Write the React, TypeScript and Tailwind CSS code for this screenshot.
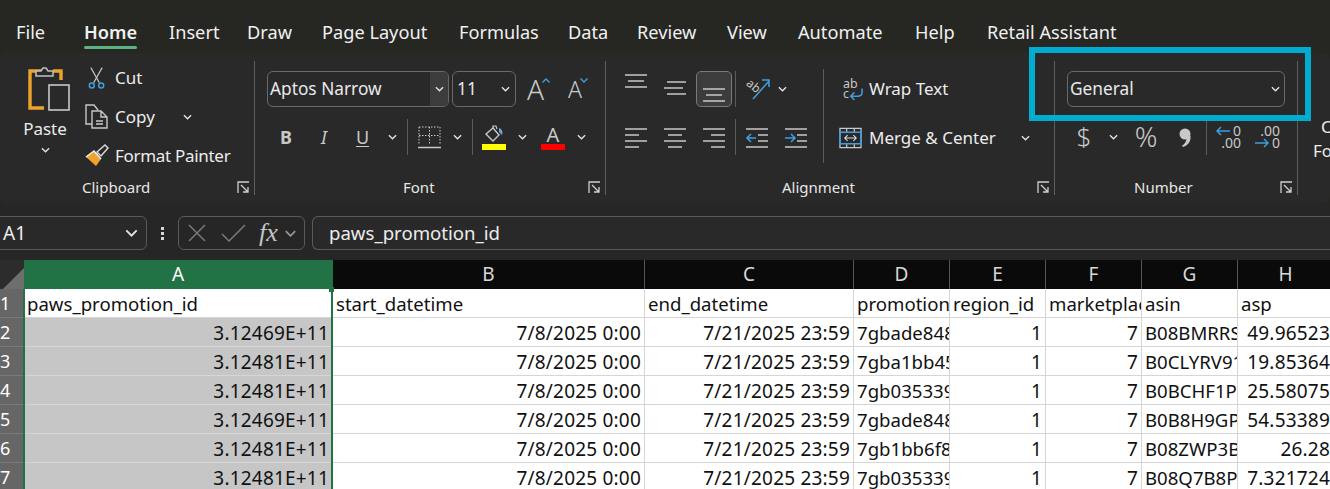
import type { ReactNode } from "react";

const uiFont = "font-['Noto_Sans',sans-serif]";

const tabs = [
  { label: "File", width: "w-[68px]", left: "ml-[16px]" },
  { label: "Home", width: "w-[85px]", active: true },
  { label: "Insert", width: "w-[78px]" },
  { label: "Draw", width: "w-[75px]" },
  { label: "Page Layout", width: "w-[137px]" },
  { label: "Formulas", width: "w-[109px]" },
  { label: "Data", width: "w-[69px]" },
  { label: "Review", width: "w-[90px]" },
  { label: "View", width: "w-[71px]" },
  { label: "Automate", width: "w-[117px]" },
  { label: "Help", width: "w-[72px]" },
  { label: "Retail Assistant", width: "w-[150px]" },
];

const columns = [
  { name: "A", width: "w-[309px]", active: true },
  { name: "B", width: "w-[312px]" },
  { name: "C", width: "w-[209px]" },
  { name: "D", width: "w-[96px]" },
  { name: "E", width: "w-[96px]" },
  { name: "F", width: "w-[96px]" },
  { name: "G", width: "w-[96px]" },
  { name: "H", width: "w-[96px]" },
];

// right: true means number-style right alignment
const rows: { text: string; right?: boolean }[][] = [
  [
    { text: "paws_promotion_id" },
    { text: "start_datetime" },
    { text: "end_datetime" },
    { text: "promotion_code" },
    { text: "region_id" },
    { text: "marketplace_id" },
    { text: "asin" },
    { text: "asp" },
  ],
  ...[
    ["3.12469E+11", "7gbade84812", "B08BMRRS1", "49.96523"],
    ["3.12481E+11", "7gba1bb4512", "B0CLYRV91", "19.85364"],
    ["3.12481E+11", "7gb03533912", "B0BCHF1P1", "25.58075"],
    ["3.12469E+11", "7gbade84812", "B0B8H9GP1", "54.53389"],
    ["3.12481E+11", "7gb1bb6f812", "B08ZWP3B1", "26.28"],
    ["3.12481E+11", "7gb03533912", "B08Q7B8P1", "7.321724"],
  ].map(([id, promo, asin, asp]) => [
    { text: id, right: true },
    { text: "7/8/2025 0:00", right: true },
    { text: "7/21/2025 23:59", right: true },
    { text: promo },
    { text: "1", right: true },
    { text: "7", right: true },
    { text: asin },
    { text: asp, right: true },
  ]),
];

function Chevron({ className = "" }: { className?: string }) {
  return (
    <svg viewBox="0 0 10 6" className={`w-[9px] h-[6px] shrink-0 ${className}`} fill="none" stroke="#e4e4e4" strokeWidth="1.5">
      <path d="M1 1l4 4 4-4" />
    </svg>
  );
}

function Lines({ ys, xs }: { ys: number[]; xs: [number, number][] }) {
  return (
    <svg viewBox="0 0 22 22" className="w-[22px] h-[22px]" stroke="#c8c8c8" strokeWidth="1.4">
      {ys.map((y, i) => (
        <path key={y} d={`M${xs[i][0]} ${y}H${xs[i][1]}`} />
      ))}
    </svg>
  );
}

function Launcher() {
  return (
    <svg viewBox="0 0 13 13" className="absolute right-[4px] top-[2px] w-[13px] h-[13px]" fill="none" strokeWidth="1.3">
      <path d="M12 1H1v11" stroke="#d0d0d0" />
      <path d="M4 4l7 7M11 6v5H6" stroke="#d0d0d0" />
    </svg>
  );
}

function Cell({ width, children }: { width: string; children?: ReactNode }) {
  return <div className={`${width} h-full flex items-center justify-center shrink-0`}>{children}</div>;
}

function Sep() {
  return <div className="w-px h-[36px] bg-[#5c5c5c] shrink-0" />;
}

function GroupDivider() {
  return <div className="w-px h-[134px] bg-[#5e5e5e] self-center shrink-0" />;
}

function GroupLabel({ label, pad }: { label: string; pad: string }) {
  return (
    <div className={`relative mt-auto h-[16px] mb-[8px] flex items-center ${pad} text-[15px] leading-none text-[#e6e6e6]`}>
      {label}
      <Launcher />
    </div>
  );
}

function ClipboardGroup() {
  return (
    <div className="w-[254px] shrink-0 flex flex-col">
      <div className="flex h-[122px] shrink-0">
        <div className="w-[82px] pt-[13px] flex flex-col items-center pl-[8px] shrink-0">
          <svg viewBox="0 0 42 46" className="w-[42px] h-[46px] ml-[7px]" fill="none">
            <path d="M15 5H2v37h14" stroke="#eda42e" strokeWidth="3.4" />
            <path d="M25 5h8v9" stroke="#eda42e" strokeWidth="3.4" />
            <path d="M8 10V5h5l2-3h3l2 3h5v5z" fill="#292929" stroke="#c0c0c0" strokeWidth="1.5" />
            <rect x="21" y="19" width="20" height="25" fill="#292929" stroke="#c8c8c8" strokeWidth="1.6" />
          </svg>
          <span className="text-[17px] leading-none mt-[8px] text-[#ececec]">Paste</span>
          <Chevron className="mt-[10px]" />
        </div>
        <div className="flex flex-col pt-[5px] text-[17px] text-[#ececec] leading-none">
          <div className="h-[39px] shrink-0 flex items-center gap-[10px] pl-[6px]">
            <svg viewBox="0 0 18 24" className="w-[17px] h-[24px]" fill="none">
              <path d="M3 1l9 16M15 1L6 17" stroke="#c4c4c4" strokeWidth="1.3" />
              <circle cx="4" cy="20" r="2.6" stroke="#3f9ddd" strokeWidth="1.6" />
              <circle cx="14" cy="20" r="2.6" stroke="#3f9ddd" strokeWidth="1.6" />
            </svg>
            <span>Cut</span>
          </div>
          <div className="h-[39px] shrink-0 flex items-center gap-[6px] pl-[3px]">
            <svg viewBox="0 0 24 25" className="w-[24px] h-[25px]" fill="none" stroke="#c8c8c8" strokeWidth="1.4">
              <path d="M7 20H1V1h8l4 5" />
              <path d="M7 7h9l6 6v11H7zM16 7v6h6M11 17h7M11 20h7" fill="#292929" />
            </svg>
            <span className="w-[62px]">Copy</span>
            <Chevron />
          </div>
          <div className="h-[39px] shrink-0 flex items-center gap-[6px] pl-[3px]">
            <svg viewBox="0 0 24 23" className="w-[24px] h-[23px]" fill="none">
              <path d="M1 13l8-6 7 8-5 7z" fill="#eda42e" />
              <path d="M1 13l8-6 7 8" stroke="#f0f0f0" strokeWidth="1.5" />
              <path d="M12 8l8-7 3 3-7 8z" fill="#292929" stroke="#d8d8d8" strokeWidth="1.5" />
            </svg>
            <span className="tracking-[-0.3px]">Format Painter</span>
          </div>
        </div>
      </div>
      <GroupLabel label="Clipboard" pad="pl-[82px]" />
    </div>
  );
}

function FontGroup() {
  return (
    <div className="w-[350px] shrink-0 flex flex-col pt-[18px] pl-[12px]">
      <div className="h-[36px] flex items-center text-[#e8e8e8]">
        <div className="w-[182px] h-full flex items-center rounded-[6px] border border-[#6a6a6a] overflow-hidden shrink-0">
          <span className="pl-[2px] text-[17.3px] flex-1">Aptos Narrow</span>
          <div className="w-[18px] h-full bg-[#3c3c3c] flex items-center justify-center">
            <Chevron />
          </div>
        </div>
        <div className="ml-[3px] w-[64px] h-full flex items-center justify-between rounded-[6px] border border-[#6a6a6a] px-[4px] pr-[5px] shrink-0">
          <span className="text-[17.3px]">11</span>
          <Chevron />
        </div>
        <span className="ml-[11px] w-[15px] text-[28px] leading-none text-[#c8c8c8] font-light">A</span>
        <svg viewBox="0 0 8 5" className="w-[8px] h-[5px] -mt-[18px]" fill="none" stroke="#3f9ddd" strokeWidth="1.4">
          <path d="M0.5 4.5L4 1l3.5 3.5" />
        </svg>
        <span className="ml-[18px] w-[12px] text-[23px] leading-none text-[#c8c8c8] font-light">A</span>
        <svg viewBox="0 0 8 5" className="w-[8px] h-[5px] -mt-[18px]" fill="none" stroke="#3f9ddd" strokeWidth="1.4">
          <path d="M0.5 0.5L4 4l3.5-3.5" />
        </svg>
      </div>
      <div className="h-[36px] mt-[12px] flex items-center">
        <Cell width="w-[38px]">
          <span className="text-[18px] font-bold text-[#c8c8c8]">B</span>
        </Cell>
        <Cell width="w-[38px]">
          <span className="text-[18px] italic text-[#c8c8c8]">I</span>
        </Cell>
        <Cell width="w-[39px]">
          <span className="text-[18px] underline underline-offset-2 text-[#c8c8c8]">U</span>
        </Cell>
        <Cell width="w-[20px]">
          <Chevron />
        </Cell>
        <div className="w-[5px] shrink-0" />
        <Sep />
        <Cell width="w-[42px]">
          <svg viewBox="0 0 23 23" className="w-[23px] h-[23px]" fill="none" stroke="#c8c8c8">
            <path d="M1 1h21M1 1v17M22 1v17M1 9.500h21M11.500 1v17" strokeDasharray="1.500 1.500" />
            <path d="M0 21.500h23" strokeWidth="1.600" />
          </svg>
        </Cell>
        <Cell width="w-[14px]">
          <Chevron />
        </Cell>
        <div className="w-[8px] shrink-0" />
        <Sep />
        <Cell width="w-[42px]">
          <svg viewBox="0 0 24 25" className="w-[24px] h-[25px]" fill="none">
            <path d="M4 9l7-6 6 7-6 6z" stroke="#c8c8c8" strokeWidth="1.4" />
            <path d="M11 3V1h3l1 3" stroke="#c8c8c8" strokeWidth="1.2" />
            <path d="M17 3c3 1 4 4 3 7l-3-3z" fill="#6fa8d8" />
            <rect y="19" width="24" height="6" fill="#ffff00" />
          </svg>
        </Cell>
        <Cell width="w-[14px]">
          <Chevron />
        </Cell>
        <Cell width="w-[48px]">
          <div className="flex flex-col items-center">
            <span className="text-[20px] leading-[19px] text-[#c8c8c8]">A</span>
            <div className="w-[24px] h-[6px] bg-[#ff0000]" />
          </div>
        </Cell>
        <Cell width="w-[9px]">
          <Chevron />
        </Cell>
      </div>
      <GroupLabel label="Font" pad="pl-[136px]" />
    </div>
  );
}

function AlignmentGroup() {
  const narrow: [number, number][] = [
    [0, 22],
    [3, 19],
    [0, 22],
  ];
  return (
    <div className="w-[448px] shrink-0 flex flex-col pt-[18px]">
      <div className="flex h-[84px]">
        <div className="w-[217px] shrink-0 flex flex-col gap-[12px]">
          <div className="h-[36px] flex items-center pl-[19px]">
            <div className="-mt-[12px]">
              <Lines ys={[3, 9, 15]} xs={narrow} />
            </div>
            <div className="ml-[17px] -mt-[2px]">
              <Lines ys={[5, 11, 17]} xs={[[3, 22], [0, 19], [3, 22]]} />
            </div>
            <div className="ml-[10px] w-[36px] h-[36px] rounded-[5px] border border-[#7a7a7a] bg-[#3c3c3c] flex items-center justify-center pt-[10px]">
              <Lines ys={[6, 12, 18]} xs={[[0, 22], [3, 19], [0, 22]]} />
            </div>
            <div className="ml-[3px]">
              <Sep />
            </div>
            <svg viewBox="0 0 26 24" className="ml-[9px] w-[26px] h-[24px]" fill="none">
              <path d="M8 22L24 4M17 3h7v7" stroke="#3f9ddd" strokeWidth="1.6" />
              <text x="1" y="12" fontSize="12" fill="#c8c8c8" transform="rotate(40 7 9)">ab</text>
            </svg>
            <Chevron className="ml-[7px]" />
          </div>
          <div className="h-[36px] flex items-center pl-[19px]">
            <Lines ys={[3, 9, 15, 21]} xs={[[0, 22], [0, 14], [0, 22], [0, 14]]} />
            <div className="ml-[17px]">
              <Lines ys={[3, 9, 15, 21]} xs={[[0, 22], [4, 18], [0, 22], [4, 18]]} />
            </div>
            <div className="ml-[17px]">
              <Lines ys={[3, 9, 15, 21]} xs={[[0, 22], [8, 22], [0, 22], [8, 22]]} />
            </div>
            <div className="ml-[10px]">
              <Sep />
            </div>
            <svg viewBox="0 0 22 22" className="ml-[10px] w-[22px] h-[22px]" fill="none" strokeWidth="1.4">
              <path d="M0 3h22M12 9h10M12 15h10M0 21h22" stroke="#c8c8c8" />
              <path d="M10 12H1M5 8l-4 4 4 4" stroke="#3f9ddd" strokeWidth="1.6" />
            </svg>
            <svg viewBox="0 0 22 22" className="ml-[17px] w-[22px] h-[22px]" fill="none" strokeWidth="1.4">
              <path d="M0 3h22M12 9h10M12 15h10M0 21h22" stroke="#c8c8c8" />
              <path d="M0 12h9M6 8l4 4-4 4" stroke="#3f9ddd" strokeWidth="1.6" />
            </svg>
          </div>
        </div>
        <div className="w-px h-[94px] bg-[#5c5c5c] -mt-[2px] shrink-0" />
        <div className="flex flex-col gap-[12px] text-[17px] text-[#ececec] pl-[15px]">
          <div className="h-[36px] flex items-center gap-[5px] pl-[4px]">
            <svg viewBox="0 0 22 24" className="w-[21px] h-[23px]" fill="none">
              <text x="0" y="10" fontSize="13" fill="#c8c8c8">ab</text>
              <text x="0" y="21" fontSize="13" fill="#c8c8c8">c</text>
              <path d="M20 11v4c0 3-2 4-4 4H9M12 15l-4 4 4 4" stroke="#3f9ddd" strokeWidth="1.6" />
            </svg>
            <span>Wrap Text</span>
          </div>
          <div className="h-[36px] flex items-center gap-[7px] pt-[1px]">
            <svg viewBox="0 0 24 22" className="w-[23px] h-[22px]" fill="none">
              <path d="M1 1h22v20H1zM8 1v4M16 1v4M8 17v4M16 17v4" stroke="#c8c8c8" strokeWidth="1.3" />
              <rect x="1" y="5" width="22" height="12" stroke="#3f9ddd" strokeWidth="1.6" />
              <path d="M6 11h12M9 8l-3 3 3 3M15 8l3 3-3 3" stroke="#e0e0e0" strokeWidth="1.1" />
            </svg>
            <span className="w-[145px]">Merge &amp; Center</span>
            <Chevron />
          </div>
        </div>
      </div>
      <GroupLabel label="Alignment" pad="pl-[176px]" />
    </div>
  );
}

function NumberGroup() {
  return (
    <div className="w-[242px] shrink-0 flex flex-col pt-[18px] pl-[12px]">
      <div className="h-[36px] w-[218px] flex items-center justify-between rounded-[6px] border border-[#6a6a6a] pl-[2px] pr-[4px] text-[17.3px] text-[#e8e8e8]">
        <span>General</span>
        <Chevron />
      </div>
      <div className="h-[36px] mt-[12px] flex items-center text-[#c8c8c8]">
        <Cell width="w-[34px]">
          <span className="text-[26px] leading-none font-light -mt-[2px]">$</span>
        </Cell>
        <Cell width="w-[24px]">
          <Chevron />
        </Cell>
        <Cell width="w-[42px]">
          <span className="text-[28px] leading-none font-light -mt-[2px]">%</span>
        </Cell>
        <Cell width="w-[36px]">
          <svg viewBox="0 0 12 19" className="w-[12px] h-[19px]" fill="#c8c8c8">
            <circle cx="6" cy="6" r="5.500" />
            <path d="M8 8h3.500c.5 5-2 9-7.500 11l-1-1.500c3-1.500 4.500-4 5-9.500z" />
          </svg>
        </Cell>
        <div className="w-[3px] shrink-0" />
        <Sep />
        <div className="ml-[9px] w-[25px] flex flex-col items-end text-[14px] leading-[12px] relative">
          <span>0</span>
          <span>.00</span>
          <svg viewBox="0 0 14 10" className="absolute left-0 top-[1px] w-[14px] h-[10px]" fill="none" stroke="#3f9ddd" strokeWidth="1.5">
            <path d="M14 5H1M5 1L1 5l4 4" />
          </svg>
        </div>
        <div className="ml-[14px] w-[25px] flex flex-col items-end text-[14px] leading-[12px] relative">
          <span>.00</span>
          <span>0</span>
          <svg viewBox="0 0 14 10" className="absolute left-0 top-[13px] w-[14px] h-[10px]" fill="none" stroke="#3f9ddd" strokeWidth="1.5">
            <path d="M0 5h13M9 1l4 4-4 4" />
          </svg>
        </div>
      </div>
      <GroupLabel label="Number" pad="pl-[67px]" />
    </div>
  );
}

function Ribbon() {
  return (
    <div className="relative h-[150px] rounded-[6px] bg-[#292929] flex overflow-hidden">
      <ClipboardGroup />
      <GroupDivider />
      <FontGroup />
      <GroupDivider />
      <AlignmentGroup />
      <GroupDivider />
      <NumberGroup />
      <GroupDivider />
      <div className="pl-[15px] pt-[62px] text-[17px] leading-[24px] text-[#ececec] whitespace-nowrap">
        <div className="pl-[8px]">C</div>
        <div>Fo</div>
      </div>
    </div>
  );
}

function FormulaBar() {
  return (
    <div className="h-[55px] bg-[#262626] flex items-center overflow-hidden pt-[1px]">
      <div className="w-[152px] h-[34px] -ml-[5px] shrink-0 rounded-[6px] border border-[#5a5a5a] bg-[#292929] flex items-center justify-between pl-[7px] pr-[8px] text-[19px] text-[#ececec]">
        <span>A1</span>
        <Chevron className="w-[13px] h-[8px]" />
      </div>
      <div className="w-[31px] flex flex-col items-center gap-[2px] shrink-0">
        <div className="w-[3px] h-[3px] bg-[#d8d8d8]" />
        <div className="w-[3px] h-[3px] bg-[#d8d8d8]" />
        <div className="w-[3px] h-[3px] bg-[#d8d8d8]" />
      </div>
      <div className="w-[127px] h-[34px] shrink-0 rounded-[6px] border border-[#5a5a5a] flex items-center pl-[9px]">
        <svg viewBox="0 0 18 18" className="w-[18px] h-[18px]" fill="none" stroke="#7a7a7a" strokeWidth="1.5">
          <path d="M1 1l16 16M17 1L1 17" />
        </svg>
        <svg viewBox="0 0 25 18" className="ml-[15px] w-[25px] h-[18px]" fill="none" stroke="#7a7a7a" strokeWidth="1.5">
          <path d="M1 10l7 7L24 1" />
        </svg>
        <span className="ml-[13px] text-[26px] italic text-[#c4c4c4] leading-none font-['Liberation_Serif',serif]">fx</span>
        <Chevron className="ml-[6px] w-[13px] h-[7px] opacity-60" />
      </div>
      <div className="ml-[7px] flex-1 h-[34px] rounded-l-[6px] border border-[#5a5a5a] border-r-0 bg-[#292929] flex items-center pl-[16px] text-[18.6px] text-[#ececec]">
        paws_promotion_id
      </div>
    </div>
  );
}

function Sheet() {
  return (
    <div className="font-['Noto_Sans',sans-serif]">
      <div className="h-[29px] flex bg-[#0a0a0a]">
        <div className="w-[24px] shrink-0 bg-[#2c2c2c] flex items-end justify-end">
          <div className="w-0 h-0 border-l-[21px] border-l-transparent border-b-[21px] border-b-[#6e6e6e]" />
        </div>
        {columns.map((col) => (
          <div
            key={col.name}
            className={`${col.width} shrink-0 flex items-center justify-center text-[19px] leading-none border-r ${
              col.active ? "bg-[#217346] text-white border-[#217346]" : "text-[#d8d8d8] border-[#555]"
            }`}
          >
            {col.name}
          </div>
        ))}
      </div>
      <div className="relative">
        {rows.map((row, r) => (
          <div key={r} className="h-[29px] flex bg-white">
            <div className="w-[24px] shrink-0 bg-[#666666] border-b border-[#7a7a7a] flex items-center text-[18px] leading-none text-white">
              {r + 1}
            </div>
            {row.map((cell, c) => (
              <div
                key={c}
                className={`${columns[c].width} shrink-0 border-r border-b border-[#d6d6d6] flex items-center overflow-hidden whitespace-nowrap px-[3px] pt-[2px] leading-none text-[#111] ${
                  cell.right ? "justify-end text-[19px] tracking-[0.2px]" : "justify-start text-[18.6px]"
                } ${c === 0 && r > 0 ? "bg-[#c6c6c6] border-[#b8b8b8]" : ""}`}
              >
                {cell.text}
              </div>
            ))}
          </div>
        ))}
        {/* selection outline of column A */}
        <div className="absolute left-[23px] top-0 bottom-0 w-[310px] border-x-2 border-[#217346] pointer-events-none" />
        <div className="absolute left-[329px] -top-[2px] w-[5px] h-[5px] bg-[#217346]" />
      </div>
    </div>
  );
}

export default function App() {
  return (
    <div className={`relative w-[1330px] h-[489px] overflow-hidden bg-[#262622] text-white ${uiFont}`}>
      <div className="h-[53px] flex items-start pt-[17px] text-[18.2px] leading-[30px] text-[#f0f0f0]">
        {tabs.map((tab) => (
          <div key={tab.label} className={`${tab.width} ${tab.left ?? ""} shrink-0`}>
            <span className={`relative inline-block ${tab.active ? "font-semibold" : ""}`}>
              {tab.label}
              {tab.active && <span className="absolute left-0 right-0 -bottom-[2px] h-[3px] bg-[#5cb484] rounded-full" />}
            </span>
          </div>
        ))}
      </div>
      <Ribbon />
      <div className="h-[2px]" />
      <FormulaBar />
      <Sheet />
      {/* annotation box drawn on top of the screenshot */}
      <div className="absolute left-[1029px] top-[47px] w-[282px] h-[74px] border-[6px] border-[#00acd0] pointer-events-none" />
    </div>
  );
}
